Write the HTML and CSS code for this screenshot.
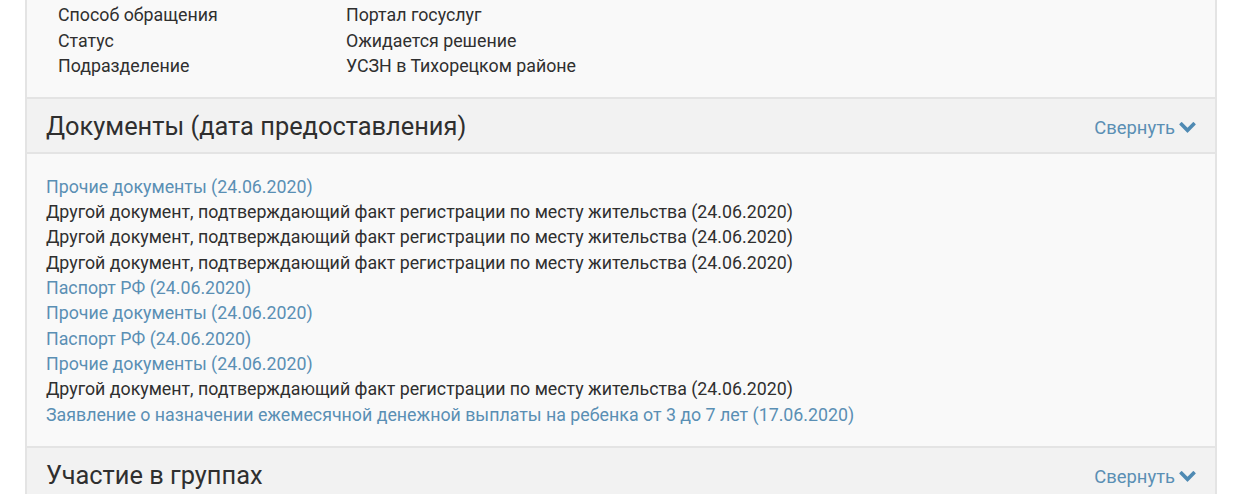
FILE: index.html
```html
<!DOCTYPE html>
<html lang="ru">

<head>
    <meta charset="utf-8">
    <meta name="viewport" content="width=device-width, initial-scale=1.0">
    <title>Заявление</title>
    <link rel="stylesheet" href="styles.css">
</head>

<body>
    <div class="panel">
        <section class="info">
            <div class="info-row">
                <span class="info-label">Способ обращения</span>
                <span class="info-value">Портал госуслуг</span>
            </div>
            <div class="info-row">
                <span class="info-label">Статус</span>
                <span class="info-value">Ожидается решение</span>
            </div>
            <div class="info-row">
                <span class="info-label">Подразделение</span>
                <span class="info-value">УСЗН в Тихорецком районе</span>
            </div>
        </section>

        <header class="block-head">
            <h2>Документы (дата предоставления)</h2>
            <a class="toggle" href="#">Свернуть
                <svg class="chevron" viewBox="64 560 1664 1010" width="17" height="11">
                    <path d="M1683 808l-742 741q-19 19-45 19t-45-19l-742-741q-19-19-19-45.5t19-45.5l166-165q19-19 45-19t45 19l531 531 531-531q19-19 45-19t45 19l166 165q19 19 19 45.5t-19 45.5z" fill="currentColor" />
                </svg>
            </a>
        </header>
        <section class="docs">
            <a class="doc link" href="#">Прочие документы (24.06.2020)</a>
            <span class="doc">Другой документ, подтверждающий факт регистрации по месту жительства (24.06.2020)</span>
            <span class="doc">Другой документ, подтверждающий факт регистрации по месту жительства (24.06.2020)</span>
            <span class="doc">Другой документ, подтверждающий факт регистрации по месту жительства (24.06.2020)</span>
            <a class="doc link" href="#">Паспорт РФ (24.06.2020)</a>
            <a class="doc link" href="#">Прочие документы (24.06.2020)</a>
            <a class="doc link" href="#">Паспорт РФ (24.06.2020)</a>
            <a class="doc link" href="#">Прочие документы (24.06.2020)</a>
            <span class="doc">Другой документ, подтверждающий факт регистрации по месту жительства (24.06.2020)</span>
            <a class="doc link" href="#">Заявление о назначении ежемесячной денежной выплаты на ребенка от 3 до 7 лет (17.06.2020)</a>
        </section>

        <header class="block-head">
            <h2>Участие в группах</h2>
            <a class="toggle" href="#">Свернуть
                <svg class="chevron" viewBox="64 560 1664 1010" width="17" height="11">
                    <path d="M1683 808l-742 741q-19 19-45 19t-45-19l-742-741q-19-19-19-45.5t19-45.5l166-165q19-19 45-19t45 19l531 531 531-531q19-19 45-19t45 19l166 165q19 19 19 45.5t-19 45.5z" fill="currentColor" />
                </svg>
            </a>
        </header>
    </div>
</body>

</html>
```

FILE: styles.css
```css
* {
    box-sizing: border-box;
}

body {
    margin: 0;
    background: #fff;
    font-family: Roboto, "Noto Sans", sans-serif;
    font-size: 17.8px;
    color: #2f2f2f;
}

.panel {
    margin: 0 25px;
    border-left: 2px solid #e4e4e4;
    border-right: 2px solid #e4e4e4;
    background: #f9f9f9;
}

.info {
    padding: 2px 0 18px 31px;
    border-bottom: 2px solid #e4e4e4;
}

.info-row {
    display: flex;
    line-height: 25.5px;
}

.info-label {
    width: 288px;
}

.block-head {
    display: flex;
    align-items: center;
    justify-content: space-between;
    height: 55px;
    padding: 1px 19px 0;
    background: #f2f2f2;
    border-bottom: 2px solid #e4e4e4;
}

.block-head h2 {
    margin: 0;
    font-size: 25.4px;
    font-weight: 400;
    color: #2f2f2f;
}

.toggle {
    display: flex;
    align-items: center;
    gap: 4px;
    margin-top: 4px;
    color: #5a8fb4;
    text-decoration: none;
    font-size: 18.4px;
}

.chevron {
    color: #4f8ab3;
}

.docs {
    display: flex;
    flex-direction: column;
    align-items: flex-start;
    padding: 20px 19px 19px;
    border-bottom: 2px solid #e4e4e4;
    line-height: 25.35px;
}

.doc {
    color: #2f2f2f;
    text-decoration: none;
}

.link {
    color: #5a8fb4;
}
```
